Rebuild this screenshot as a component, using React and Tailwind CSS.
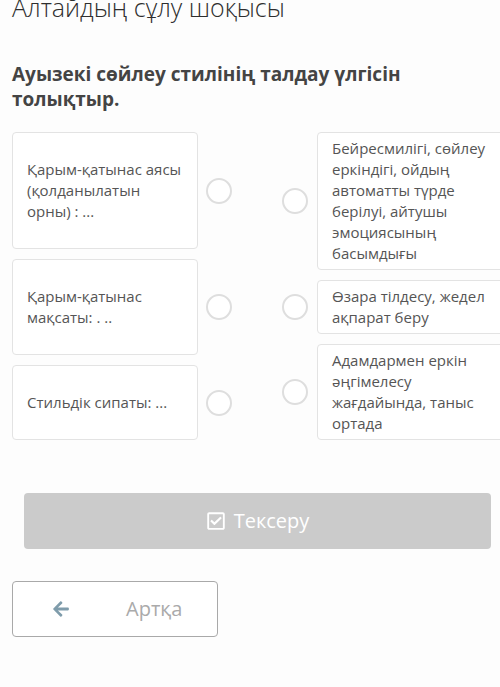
import React from 'react';
import { FaArrowLeft, FaRegCheckSquare } from 'react-icons/fa';

const leftItems = [
  { text: 'Қарым-қатынас аясы (қолданылатын орны) : ...' },
  { text: 'Қарым-қатынас мақсаты: . ..' },
  { text: 'Стильдік сипаты: ...' },
];

const rightItems = [
  { text: 'Бейресмилігі, сөйлеу еркіндігі, ойдың автоматты түрде берілуі, айтушы эмоциясының басымдығы' },
  { text: 'Өзара тілдесу, жедел ақпарат беру' },
  { text: 'Адамдармен еркін әңгімелесу жағдайында, таныс ортада' },
];

const Radio = () => (
  <div className="w-[26px] h-[26px] shrink-0 rounded-full border-[2.5px] border-[#dedede] bg-white" />
);

export default function App() {
  return (
    <div
      className="w-[500px] h-[687px] overflow-hidden bg-[#fdfdfd] pl-3"
      style={{ fontFamily: '"Open Sans", "Noto Sans", sans-serif' }}
    >
      <h1 className="mt-[-8px] text-[25px] leading-[30px] font-light text-[#2e2e2e] whitespace-nowrap">
        Алтайдың сұлу шоқысы
      </h1>

      <h2 className="mt-[40px] text-[19px] leading-[25px] font-bold text-[#444] w-[440px]">
        Ауызекі сөйлеу стилінің талдау үлгісін толықтыр.
      </h2>

      <div className="mt-5 flex">
        {/* left column */}
        <div className="flex flex-col gap-[10px] w-[237px] shrink-0">
          {leftItems.map((it, i) => (
            <div key={i} className="flex items-center">
              <div className="w-[186px] shrink-0 rounded border border-[#e3e3e3] bg-white px-[14px] py-[26px] text-[15px] leading-[21px] text-[#555]">
                {it.text}
              </div>
              <div className="ml-[8px]">
                <Radio />
              </div>
            </div>
          ))}
        </div>

        {/* right column */}
        <div className="flex flex-col gap-[10px] ml-[33px] shrink-0">
          {rightItems.map((it, i) => (
            <div key={i} className="flex items-center">
              <Radio />
              <div className="ml-[9px] w-[200px] shrink-0 rounded border border-[#e3e3e3] bg-white pl-[14px] pr-[20px] py-[5px] text-[15px] leading-[21px] text-[#555]">
                {it.text}
              </div>
            </div>
          ))}
        </div>
      </div>

      <div className="mt-[53px] ml-3 w-[467px] h-14 rounded bg-[#cbcbcb] flex items-center justify-center gap-2 text-white">
        <FaRegCheckSquare className="w-[20px] h-[20px]" />
        <span className="text-[20px]">Тексеру</span>
      </div>

      <div className="mt-8 w-[206px] h-14 rounded border border-[#a9a9a9] bg-white flex items-center">
        <FaArrowLeft className="ml-[38px] w-[20px] h-[18px] text-[#7f9cab]" />
        <span className="ml-[55px] text-[20px] text-[#aaa]">Артқа</span>
      </div>
    </div>
  );
}
